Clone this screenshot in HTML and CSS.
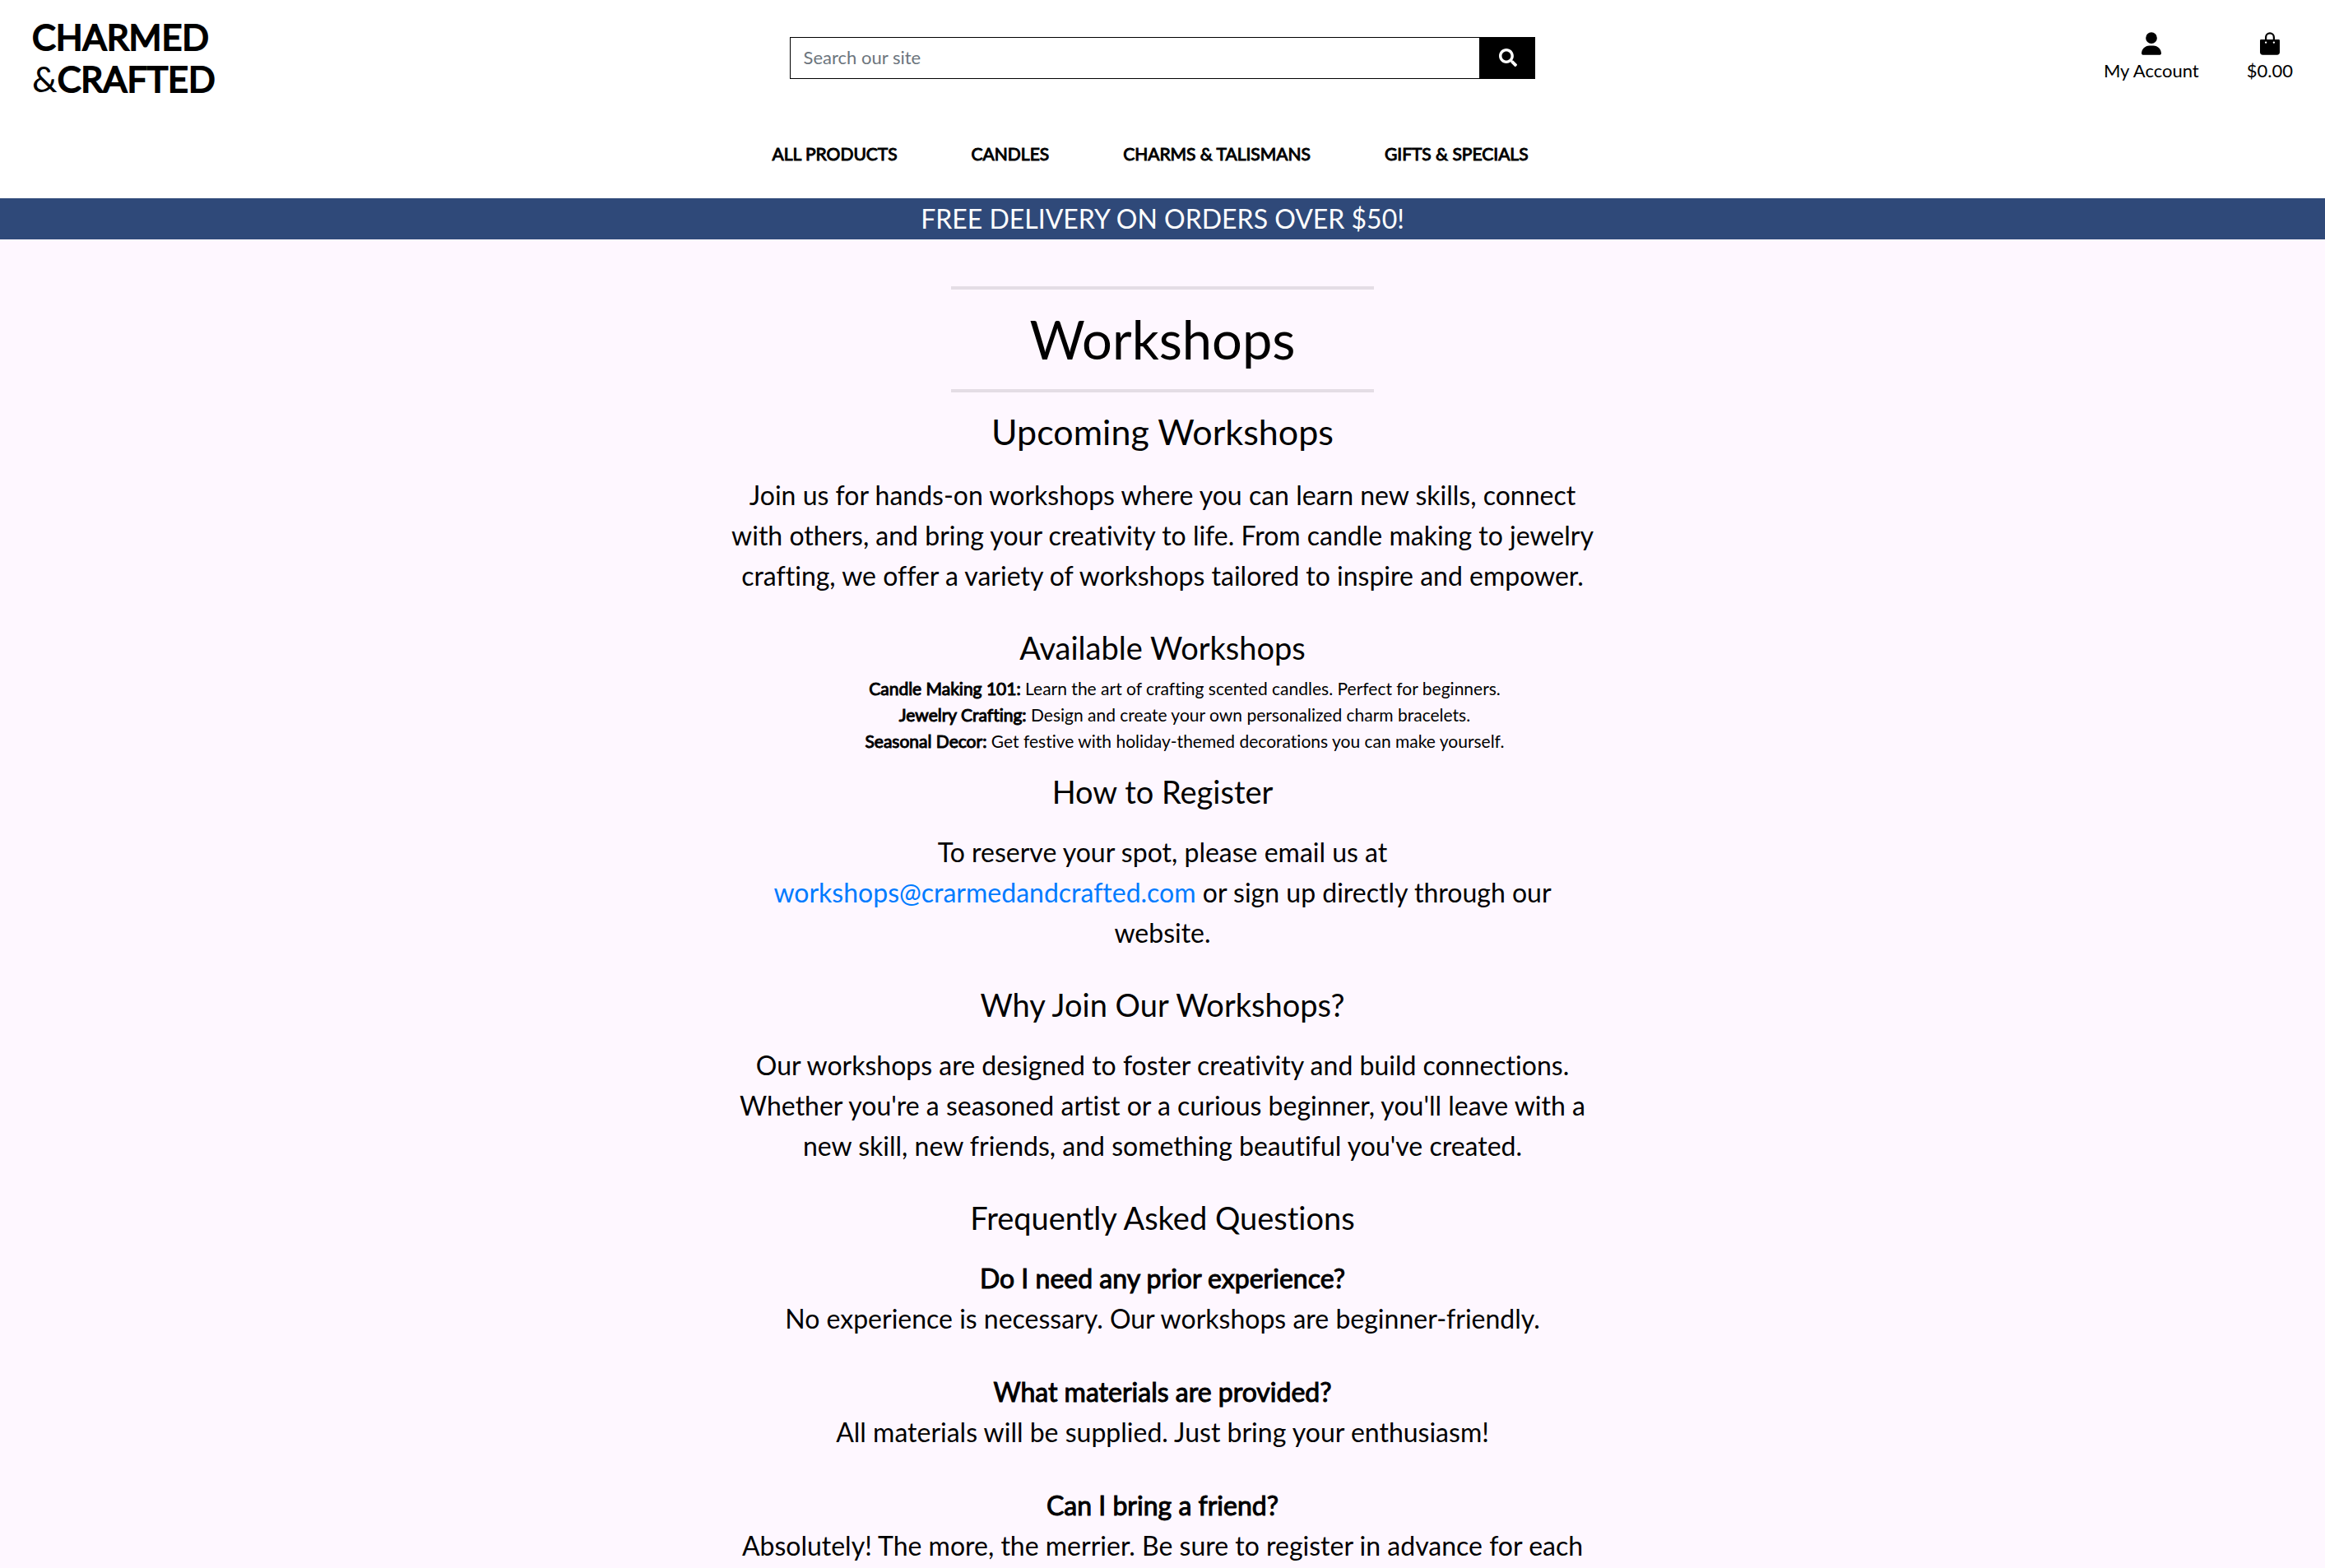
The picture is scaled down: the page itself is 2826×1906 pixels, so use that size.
FILE: index.html
```html
<!DOCTYPE html>
<html lang="en">
<head>
<meta charset="utf-8">
<meta name="viewport" content="width=device-width, initial-scale=1">
<title>Workshops | Charmed &amp; Crafted</title>
<link rel="stylesheet" href="styles.css">
</head>
<body>
<header class="site-header">
  <div class="topbar">
    <a class="logo" href="/"><strong>CHARMED</strong><br>&amp;<strong>CRAFTED</strong></a>
    <form class="search" action="/products" role="search">
      <input class="search-input" type="text" name="q" placeholder="Search our site" aria-label="Search our site">
      <button class="search-button" type="submit" aria-label="Search">
        <svg class="search-icon" viewBox="0 0 512 512" aria-hidden="true"><path fill="currentColor" d="M505 442.700L405.300 343c-4.500-4.500-10.600-7-17-7H372c27.600-35.300 44-79.700 44-128C416 93.100 322.900 0 208 0S0 93.100 0 208s93.100 208 208 208c48.300 0 92.700-16.400 128-44v16.300c0 6.400 2.500 12.500 7 17l99.700 99.700c9.400 9.400 24.600 9.400 33.900 0l28.300-28.300c9.400-9.400 9.400-24.600.1-34zM208 336c-70.700 0-128-57.200-128-128 0-70.700 57.200-128 128-128 70.700 0 128 57.200 128 128 0 70.700-57.200 128-128 128z"/></svg>
      </button>
    </form>
    <div class="account-links">
      <a class="account-link" href="/account">
        <svg class="account-icon" viewBox="0 0 448 512" aria-hidden="true"><path fill="currentColor" d="M224 256A128 128 0 1 0 224 0a128 128 0 1 0 0 256zm-45.700 48C79.800 304 0 383.800 0 482.300C0 498.700 13.300 512 29.700 512H418.300c16.400 0 29.700-13.300 29.700-29.700C448 383.800 368.200 304 269.700 304H178.300z"/></svg>
        My Account
      </a>
      <a class="account-link" href="/bag">
        <svg class="account-icon" viewBox="0 0 448 512" aria-hidden="true"><path fill="currentColor" fill-rule="evenodd" d="M112 164V112a112 112 0 0 1 224 0v52h88q24 0 24 24v260a64 64 0 0 1-64 64H64a64 64 0 0 1-64-64V188q0-24 24-24zM154 164h140V112a70 70 0 0 0-140 0zM133 208a22 22 0 1 0 0 44 22 22 0 1 0 0-44zM315 208a22 22 0 1 0 0 44 22 22 0 1 0 0-44z"/></svg>
        $0.00
      </a>
    </div>
  </div>
  <nav class="main-nav" aria-label="Main">
    <a href="/products">ALL PRODUCTS</a>
    <a href="/candles">CANDLES</a>
    <a href="/charms">CHARMS &amp; TALISMANS</a>
    <a href="/gifts">GIFTS &amp; SPECIALS</a>
  </nav>
</header>
<p class="delivery-banner">FREE DELIVERY ON ORDERS OVER $50!</p>
<main class="page">
  <hr class="rule">
  <h1>Workshops</h1>
  <hr class="rule">
  <h2>Upcoming Workshops</h2>
  <p>Join us for hands-on workshops where you can learn new skills, connect with others, and bring your creativity to life. From candle making to jewelry crafting, we offer a variety of workshops tailored to inspire and empower.</p>
  <h3>Available Workshops</h3>
  <ul class="workshop-list">
    <li><strong>Candle Making 101:</strong> Learn the art of crafting scented candles. Perfect for beginners.</li>
    <li><strong>Jewelry Crafting:</strong> Design and create your own personalized charm bracelets.</li>
    <li><strong>Seasonal Decor:</strong> Get festive with holiday-themed decorations you can make yourself.</li>
  </ul>
  <h3>How to Register</h3>
  <p>To reserve your spot, please email us at <a href="mailto:workshops@crarmedandcrafted.com">workshops@crarmedandcrafted.com</a> or sign up directly through our website.</p>
  <h3>Why Join Our Workshops?</h3>
  <p>Our workshops are designed to foster creativity and build connections. Whether you're a seasoned artist or a curious beginner, you'll leave with a new skill, new friends, and something beautiful you've created.</p>
  <h3>Frequently Asked Questions</h3>
  <p><strong>Do I need any prior experience?</strong><br>No experience is necessary. Our workshops are beginner-friendly.</p>
  <p><strong>What materials are provided?</strong><br>All materials will be supplied. Just bring your enthusiasm!</p>
  <p><strong>Can I bring a friend?</strong><br>Absolutely! The more, the merrier. Be sure to register in advance for each workshop.</p>
</main>
</body>
</html>
```
FILE: styles.css
```css
* {
  box-sizing: border-box;
}

body {
  margin: 0;
  background: #fef7ff;
  color: #000;
  font: 22px/32px Lato, sans-serif;
  font-variant-ligatures: no-common-ligatures;
}

/* Emphasis is the regular cut, thickened, so that it keeps the regular widths */
strong,
.main-nav a {
  font-weight: 400;
  -webkit-text-stroke: 1px currentColor;
}

.site-header {
  background: #fff;
}

.topbar {
  display: grid;
  grid-template-columns: 1fr 33% 1fr;
  align-items: center;
  padding: 19px 39px;
}

.logo {
  justify-self: start;
  color: inherit;
  font-size: 43px;
  line-height: 51px;
  text-decoration: none;
}

.logo strong {
  -webkit-text-stroke-width: 2px;
}

.search {
  display: flex;
  height: 51px;
}

.search-input {
  flex: 1;
  min-width: 0;
  padding: 0 16px;
  border: 1px solid #000;
  border-radius: 0;
  background: #fff;
  font: inherit;
}

.search-input::placeholder {
  color: #6c757d;
}

.search-button {
  display: flex;
  align-items: center;
  justify-content: center;
  width: 67px;
  padding: 0;
  border: 0;
  background: #000;
  color: #fff;
}

.search-icon {
  width: 22px;
  height: 22px;
}

.account-links {
  display: flex;
  justify-content: flex-end;
  gap: 58px;
}

.account-link {
  display: flex;
  flex-direction: column;
  align-items: center;
  gap: 3px;
  color: inherit;
  text-decoration: none;
}

.account-icon {
  width: 24px;
  height: 28px;
}

.main-nav {
  display: flex;
  justify-content: center;
  gap: 90px;
  padding: 31px 30px 38px 0;
  font-size: 21px;
}

.main-nav a {
  color: inherit;
  text-decoration: none;
}

.delivery-banner {
  margin: 0;
  background: #2f4979;
  color: #fff;
  font-size: 32px;
  line-height: 50px;
  text-align: center;
}

.page {
  width: 37.5%;
  margin: 0 auto;
  padding-top: 57px;
  text-align: center;
}

.rule {
  width: calc(50% - 15px);
  margin: 0 auto;
  border: 0;
  border-top: 4px solid rgba(0, 0, 0, 0.1);
}

h1,
h2,
h3 {
  margin: 0;
  font-weight: 400;
}

h1 {
  margin: 21px 0 22px;
  font-size: 65px;
  line-height: 78px;
}

h2 {
  margin-top: 22px;
  font-size: 43px;
  line-height: 52px;
}

h3 {
  font-size: 38px;
  line-height: 46px;
}

.page p {
  margin: 26px 0 40px;
  font-size: 32px;
  line-height: 49px;
}

.page p a {
  color: #007bff;
  text-decoration: none;
}

.workshop-list {
  margin: 11px 0 22px;
  padding-left: 54px;
  font-size: 21px;
  list-style: none;
}
```
